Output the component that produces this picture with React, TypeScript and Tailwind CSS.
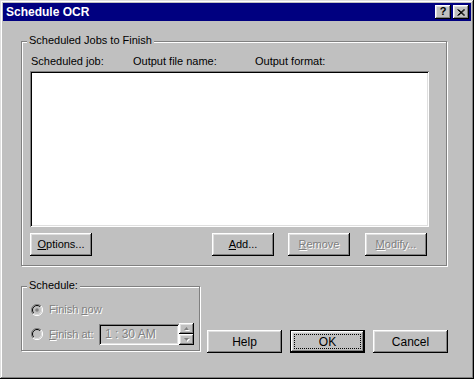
import type { ReactNode } from "react";

const bevel =
  "shadow-[inset_-1px_-1px_0_#000,inset_1px_1px_0_#fff,inset_-2px_-2px_0_#808080,inset_2px_2px_0_#dfdfdf]";
const sunken =
  "shadow-[inset_1px_1px_0_#808080,inset_-1px_-1px_0_#fff,inset_2px_2px_0_#000,inset_-2px_-2px_0_#dfdfdf]";
const etched = "border border-[#808080] shadow-[inset_1px_1px_0_#fff,1px_1px_0_#fff]";
const dim = "text-[#808080] [text-shadow:1px_1px_0_#fff]";

function Button({
  children,
  className = "",
  disabled = false,
  isDefault = false,
}: {
  children: ReactNode;
  className?: string;
  disabled?: boolean;
  isDefault?: boolean;
}) {
  return (
    <button
      className={`relative h-[23px] flex items-center justify-center bg-[#c0c0c0] ${bevel} ${
        isDefault ? "border border-black" : ""
      } ${disabled ? dim : "text-black"} ${className}`}
    >
      {children}
      {isDefault && (
        <span className="absolute inset-[3px] border border-dotted border-black" />
      )}
    </button>
  );
}

function Group({ label, className, children }: { label: string; className: string; children: ReactNode }) {
  return (
    <div className={`relative ${etched} ${className}`}>
      <span className="absolute left-[5px] top-[-8px] px-[2px] leading-[13px] bg-[#c0c0c0]">{label}</span>
      {children}
    </div>
  );
}

function Radio({ checked }: { checked?: boolean }) {
  return (
    <svg width="12" height="12" viewBox="0 0 12 12" className="shrink-0">
      <path d="M10 2 A5.5 5.5 0 0 0 2 10" fill="none" stroke="#808080" />
      <path d="M2 10 A5.5 5.5 0 0 0 10 2" fill="none" stroke="#fff" />
      <circle cx="6" cy="6" r="4.5" fill="#c0c0c0" />
      <path d="M9.2 2.8 A4.5 4.5 0 0 0 2.8 9.2" fill="none" stroke="#000" />
      <path d="M2.8 9.2 A4.5 4.5 0 0 0 9.2 2.8" fill="none" stroke="#dfdfdf" />
      {checked && <circle cx="6" cy="6" r="1.8" fill="#808080" />}
    </svg>
  );
}

function Arrow({ up }: { up?: boolean }) {
  return (
    <svg width="5" height="3" viewBox="0 0 5 3" className="[filter:drop-shadow(1px_1px_0_#fff)]">
      <path d={up ? "M2.5 0 L5 3 L0 3 Z" : "M0 0 L5 0 L2.5 3 Z"} fill="#808080" />
    </svg>
  );
}

export default function App() {
  return (
    <div className="w-[474px] h-[379px] bg-[#c0c0c0] p-[3px] shadow-[inset_-1px_-1px_0_#000,inset_1px_1px_0_#dfdfdf,inset_-2px_-2px_0_#808080,inset_2px_2px_0_#fff] [font-family:'Liberation_Sans',Arial,sans-serif] text-[11px] text-black select-none">
      {/* title bar */}
      <div className="h-[18px] bg-[#000080] flex items-center justify-between pl-[3px] pr-[2px]">
        <span className="text-white font-bold text-[12px] leading-none">Schedule OCR</span>
        <div className="flex gap-[2px]">
          <div className={`w-[16px] h-[14px] bg-[#c0c0c0] ${bevel} flex items-center justify-center font-bold text-[11px] leading-none pb-[1px]`}>
            ?
          </div>
          <div className={`w-[16px] h-[14px] bg-[#c0c0c0] ${bevel} flex items-center justify-center`}>
            <svg width="8" height="7" viewBox="0 0 8 7">
              <path d="M0.5 0.5 L7 6.5 M1.5 0.5 L8 6.5 M7 0.5 L0.5 6.5 M8 0.5 L1.5 6.5" stroke="#000" strokeWidth="1" />
            </svg>
          </div>
        </div>
      </div>

      <div className="pl-[18px]">
        <Group label="Scheduled Jobs to Finish" className="mt-[20px] w-[426px] h-[225px] pl-[8px] pt-[13px]">
          <div className="flex leading-[13px]">
            <span className="w-[103px] pl-[1px]">Scheduled job:</span>
            <span className="w-[122px]">Output file name:</span>
            <span>Output format:</span>
          </div>
          <div className={`mt-[3px] w-[399px] h-[156px] bg-white ${sunken}`} />
          <div className="mt-[6px] flex">
            <Button className="w-[62px]">
              <span>
                <span className="underline">O</span>ptions...
              </span>
            </Button>
            <Button className="w-[62px] ml-[120px]">
              <span>
                <span className="underline">A</span>dd...
              </span>
            </Button>
            <Button className="w-[62px] ml-[14px]" disabled>
              <span>
                <span className="underline">R</span>emove
              </span>
            </Button>
            <Button className="w-[62px] ml-[15px]" disabled>
              <span>
                <span className="underline">M</span>odify...
              </span>
            </Button>
          </div>
        </Group>

        <div className="flex items-start mt-[20px]">
          <Group label="Schedule:" className="w-[179px] h-[65px] pl-[9px] pt-[16px]">
            <div className="flex items-center h-[13px]">
              <Radio checked />
              <span className={`ml-[6px] ${dim}`}>
                Finish <span className="underline">n</span>ow
              </span>
            </div>
            <div className="flex items-center mt-[7px]">
              <Radio />
              <span className={`ml-[6px] w-[50px] ${dim}`}>
                <span className="underline">F</span>inish at:
              </span>
              <div className={`w-[80px] h-[21px] bg-[#c0c0c0] ${sunken} flex items-center pl-[6px] text-[12px] ${dim}`}>
                1 : 30 AM
              </div>
              <div className="flex flex-col w-[15px] h-[22px]">
                <div className={`h-[11px] bg-[#c0c0c0] ${bevel} flex items-center justify-center`}>
                  <Arrow up />
                </div>
                <div className={`h-[11px] bg-[#c0c0c0] ${bevel} flex items-center justify-center`}>
                  <Arrow />
                </div>
              </div>
            </div>
          </Group>

          <div className="flex mt-[44px] ml-[7px] gap-[8px] text-[12px]">
            <Button className="w-[75px]">Help</Button>
            <Button className="w-[75px]" isDefault>
              OK
            </Button>
            <Button className="w-[75px]">Cancel</Button>
          </div>
        </div>
      </div>
    </div>
  );
}
